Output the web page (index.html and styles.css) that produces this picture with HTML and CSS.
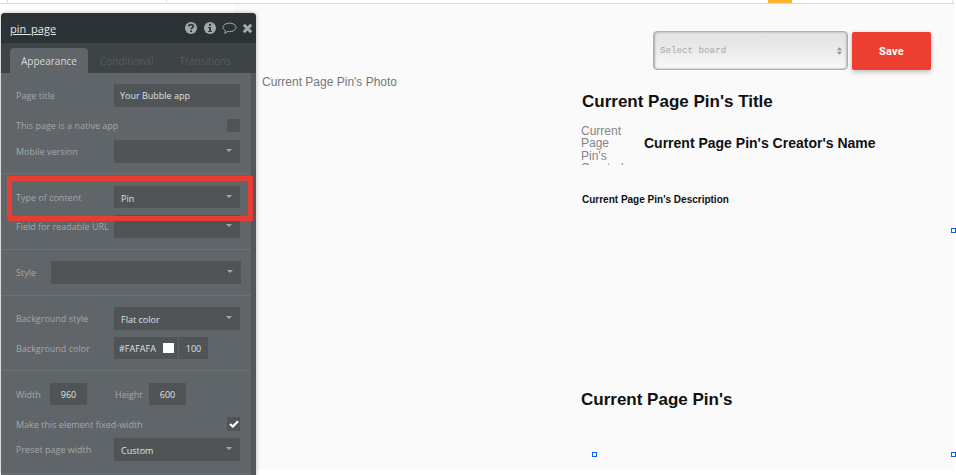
FILE: index.html
```html
<!DOCTYPE html>
<html lang="en">
<head>
<meta charset="utf-8">
<title>pin_page</title>
<link rel="stylesheet" href="styles.css">
</head>
<body>
<div class="editor">
  <div class="ruler">
    <span class="tick tick-a"></span>
    <span class="tick tick-b"></span>
    <span class="tick tick-c"></span>
    <span class="ruler-mark"></span>
  </div>
  <div class="canvas">
    <div class="canvas-white"></div>
    <div class="el photo">Current Page Pin's Photo</div>
    <div class="el board"><span>Select board</span>
      <svg class="spinner" width="5" height="8" viewBox="0 0 6 9"><path d="M3 0 6 3.500H0ZM3 9 0 5.500H6Z"/></svg>
    </div>
    <div class="el save">Save</div>
    <div class="el title">Current Page Pin's Title</div>
    <div class="el creator-pic">Current Page Pin's Creator's Picture</div>
    <div class="el creator">Current Page Pin's Creator's Name</div>
    <div class="el description">Current Page Pin's Description</div>
    <div class="el bottom-title">Current Page Pin's</div>
    <span class="el handle h-bottom"></span>
    <span class="el handle h-right"></span>
    <span class="el handle h-corner"></span>
  </div>

  <aside class="panel">
    <header class="panel-head">
      <span class="panel-name">pin_page</span>
      <div class="panel-icons">
        <svg width="14" height="14" viewBox="0 0 14 14"><circle cx="7" cy="7" r="6" fill="#a3a9ab"/><path d="M4.800 5.600C4.800 3 9.300 3 9.300 5.400 9.300 6.900 7.100 6.900 7.100 8.300" fill="none" stroke="#2b3336" stroke-width="1.700"/><rect x="6.200" y="9.300" width="1.800" height="1.800" fill="#2b3336"/></svg>
        <svg width="14" height="14" viewBox="0 0 14 14"><circle cx="7" cy="7" r="6" fill="#a3a9ab"/><rect x="6" y="2.800" width="2" height="2" fill="#2b3336"/><path d="M5.200 6H8V9.900H9V11H5.200V9.900H6.200V7.100H5.200Z" fill="#2b3336"/></svg>
        <svg width="15" height="14" viewBox="0 0 15 14"><path d="M7.500 2.200C11.100 2.200 14 4 14 6.400 14 8.800 11.100 10.600 7.500 10.600 6.900 10.600 6.300 10.500 5.800 10.400L2.800 12.500 3.500 9.600C1.900 8.800 1 7.700 1 6.400 1 4 3.900 2.200 7.500 2.200Z" fill="none" stroke="#a3a9ab"/></svg>
        <svg width="11" height="11" viewBox="0 0 11 11"><path d="M1.800 1.800 9.200 9.200M9.200 1.800 1.800 9.200" stroke="#a3a9ab" stroke-width="3"/></svg>
      </div>
    </header>
    <nav class="tabs">
      <span class="tab tab-active">Appearance</span>
      <span class="tab tab-cond">Conditional</span>
      <span class="tab tab-trans">Transitions</span>
    </nav>
    <div class="panel-body">
      <section class="group group-a">
        <div class="row row-23"><label>Page title</label><div class="input">Your Bubble app</div></div>
        <div class="row row-13 mt-12"><label>This page is a native app</label><span class="check"></span></div>
        <div class="row row-23 mt-8"><label>Mobile version</label><div class="input select"></div></div>
      </section>
      <section class="group group-b">
        <div class="row row-22"><label>Type of content</label><div class="input select">Pin</div></div>
        <div class="row row-23 mt-7"><label>Field for readable URL</label><div class="input select"></div></div>
      </section>
      <section class="group group-c">
        <div class="row row-23"><label>Style</label><div class="input select wide"></div></div>
      </section>
      <section class="group group-d">
        <div class="row row-23"><label>Background style</label><div class="input select">Flat color</div></div>
        <div class="row row-22 mt-7"><label>Background color</label>
          <div class="color">
            <div class="color-hex">#FAFAFA<span class="swatch"></span></div>
            <div class="color-alpha">100</div>
          </div>
        </div>
      </section>
      <section class="group group-e">
        <div class="row row-22 size-row">
          <label class="size-label">Width</label><div class="num">960</div>
          <label class="size-label height-label">Height</label><div class="num">600</div>
        </div>
        <div class="row row-14 mt-12"><label>Make this element fixed-width</label>
          <span class="check"><svg width="10" height="8" viewBox="0 0 10 8"><path d="M1 4 3.800 6.600 9 1.200" fill="none" stroke="#fff" stroke-width="2.200"/></svg></span>
        </div>
        <div class="row row-23 mt-7"><label>Preset page width</label><div class="input select">Custom</div></div>
      </section>
    </div>
    <div class="highlight"></div>
  </aside>
</div>
</body>
</html>
```

FILE: styles.css
```css
* { box-sizing: border-box; }
html, body { margin: 0; padding: 0; }
body { background: #fff; font-family: "Liberation Sans", Arial, sans-serif; overflow: hidden; }

.editor { position: relative; width: 956px; height: 475px; overflow: hidden; background: #fff; }

.ruler { height: 4px; border-bottom: 1px solid #dcdcdc; position: relative; width: 955px; }
.tick { position: absolute; top: 0; width: 1px; background: #e0e0e0; height: 4px; }
.tick-a { left: 7px; height: 13px; }
.tick-b { left: 166px; }
.tick-c { left: 952px; }
.ruler-mark { position: absolute; left: 768px; top: 0; width: 24px; height: 3px; background: #fbb431; }

.canvas { position: relative; width: 954px; height: 465px; background: #fafafa; overflow: visible; }
.canvas-white { position: absolute; left: 0; top: 0; width: 234px; height: 40px; background: #fff; }
.el { position: absolute; }

.photo { left: 262px; top: 71px; font-size: 12px; line-height: 14px; color: #777; }

.board { left: 653px; top: 27px; width: 195px; height: 39px; border: 1px solid #b0b0b0; border-radius: 4px;
  background: linear-gradient(#e2e2e2, #ebebeb 50%, #f9f9f9); box-shadow: inset 1px 0 2px #aaa, inset -1px 0 2px #bbb;
  font-family: "Liberation Mono", monospace; font-size: 9.200px; color: #a6a6a6; display: flex; align-items: center; justify-content: space-between; padding: 0 5px 0 6px; }
.spinner { fill: #8f8f8f; }

.save { left: 852px; top: 28px; width: 79px; height: 38px; background: #ec3f31; border-radius: 2px; color: #fff;
  font-family: Roboto, sans-serif; font-weight: 700; font-size: 11px; letter-spacing: .3px; display: flex; align-items: center; justify-content: center;
  box-shadow: 0 2px 5px rgba(0,0,0,.25); }

.title { left: 582px; top: 88px; font-size: 17px; line-height: 19px; font-weight: 700; color: #111; white-space: nowrap; }
.creator-pic { left: 581px; top: 121px; width: 50px; height: 40px; overflow: hidden; font-size: 12px; line-height: 12.400px; color: #858585; }
.creator { left: 644px; top: 131px; font-size: 14px; line-height: 17px; font-weight: 700; color: #111; white-space: nowrap; }
.description { left: 582px; top: 189px; font-size: 10px; line-height: 13px; font-weight: 700; color: #111; white-space: nowrap; }
.bottom-title { left: 581px; top: 386px; font-size: 17px; line-height: 19px; font-weight: 700; color: #111; white-space: nowrap; }

.handle { width: 5px; height: 5px; border: 1px solid #0a5cff; background: #fff; }
.h-bottom { left: 592px; top: 448px; }
.h-right { left: 951px; top: 224px; }
.h-corner { left: 951px; top: 448px; }

/* Property panel */
.panel { position: absolute; left: 1px; top: 13px; width: 255px; height: 462px; background: #5f6568; border-radius: 4px 4px 0 0;
  font-family: "Open Sans", sans-serif; box-shadow: 0 0 4px rgba(0,0,0,.3); }
.panel-head { height: 30px; background: #2b3336; border-radius: 4px 4px 0 0; display: flex; align-items: center; justify-content: space-between; padding: 0 3px 0 9px; }
.panel-name { font-size: 11px; color: #e4e6e7; text-decoration: underline; }
.panel-icons { display: flex; align-items: center; gap: 5px; }

.tabs { height: 30px; background: #3e4346; display: flex; align-items: flex-end; padding-left: 9px; font-size: 10px; }
.tab { height: 25px; display: flex; align-items: center; color: #585d5f; }
.tab-active { width: 78px; justify-content: center; background: #5f6568; color: #d8dadb; border-radius: 4px 4px 0 0; }
.tab-cond { margin-left: 12px; }
.tab-trans { margin-left: 26px; }

.panel-body { height: 402px; border-right: 5px solid #55595c; }
.group { padding: 0 11px 0 15px; border-bottom: 1px solid #6c7174; }
.group-a { height: 101px; padding-top: 11px; }
.group-b { height: 76px; padding-top: 12px; }
.group-c { height: 46px; padding-top: 11px; }
.group-d { height: 75px; padding-top: 11px; }
.group-e { height: 103px; padding-top: 12px; }

.row { display: flex; align-items: center; justify-content: space-between; font-size: 9px; color: #a4a8aa; }
.row-13 { height: 13px; }
.row-14 { height: 14px; }
.row-22 { height: 22px; }
.row-23 { height: 23px; }
.mt-7 { margin-top: 7px; }
.mt-8 { margin-top: 8px; }
.mt-12 { margin-top: 12px; }
label { white-space: nowrap; }

.input { width: 126px; height: 100%; background: #505457; color: #dfe1e2; font-size: 9px; display: flex; align-items: center; padding-left: 6px; position: relative; }
.select { padding-top: 2px; padding-left: 7px; }
.select::after { content: ""; position: absolute; right: 8px; top: 9px; border: 3px solid transparent; border-top: 3px solid #a4a8aa; border-bottom: 0; }
.wide { width: 190px; margin-right: -1px; }

.check { width: 13px; height: 13px; background: #505457; display: flex; align-items: center; justify-content: center; }
.row-14 .check { height: 14px; }

.color { width: 126px; height: 100%; display: flex; }
.color-hex { width: 64px; background: #505457; color: #dfe1e2; display: flex; align-items: center; padding-left: 5px; position: relative; }
.swatch { position: absolute; left: 49px; top: 6px; width: 11px; height: 10px; background: #fff; }
.color-alpha { width: 29px; margin-left: 1px; background: #505457; color: #dfe1e2; display: flex; align-items: center; justify-content: center; }

.size-row { justify-content: flex-start; }
.size-label { width: 34px; }
.height-label { margin-left: 28px; }
.num { width: 37px; height: 100%; background: #505457; color: #dfe1e2; display: flex; align-items: center; justify-content: center; }

.highlight { position: absolute; left: 6px; top: 163px; width: 246px; height: 45px; border: 5px solid #ea3d32; }
```
